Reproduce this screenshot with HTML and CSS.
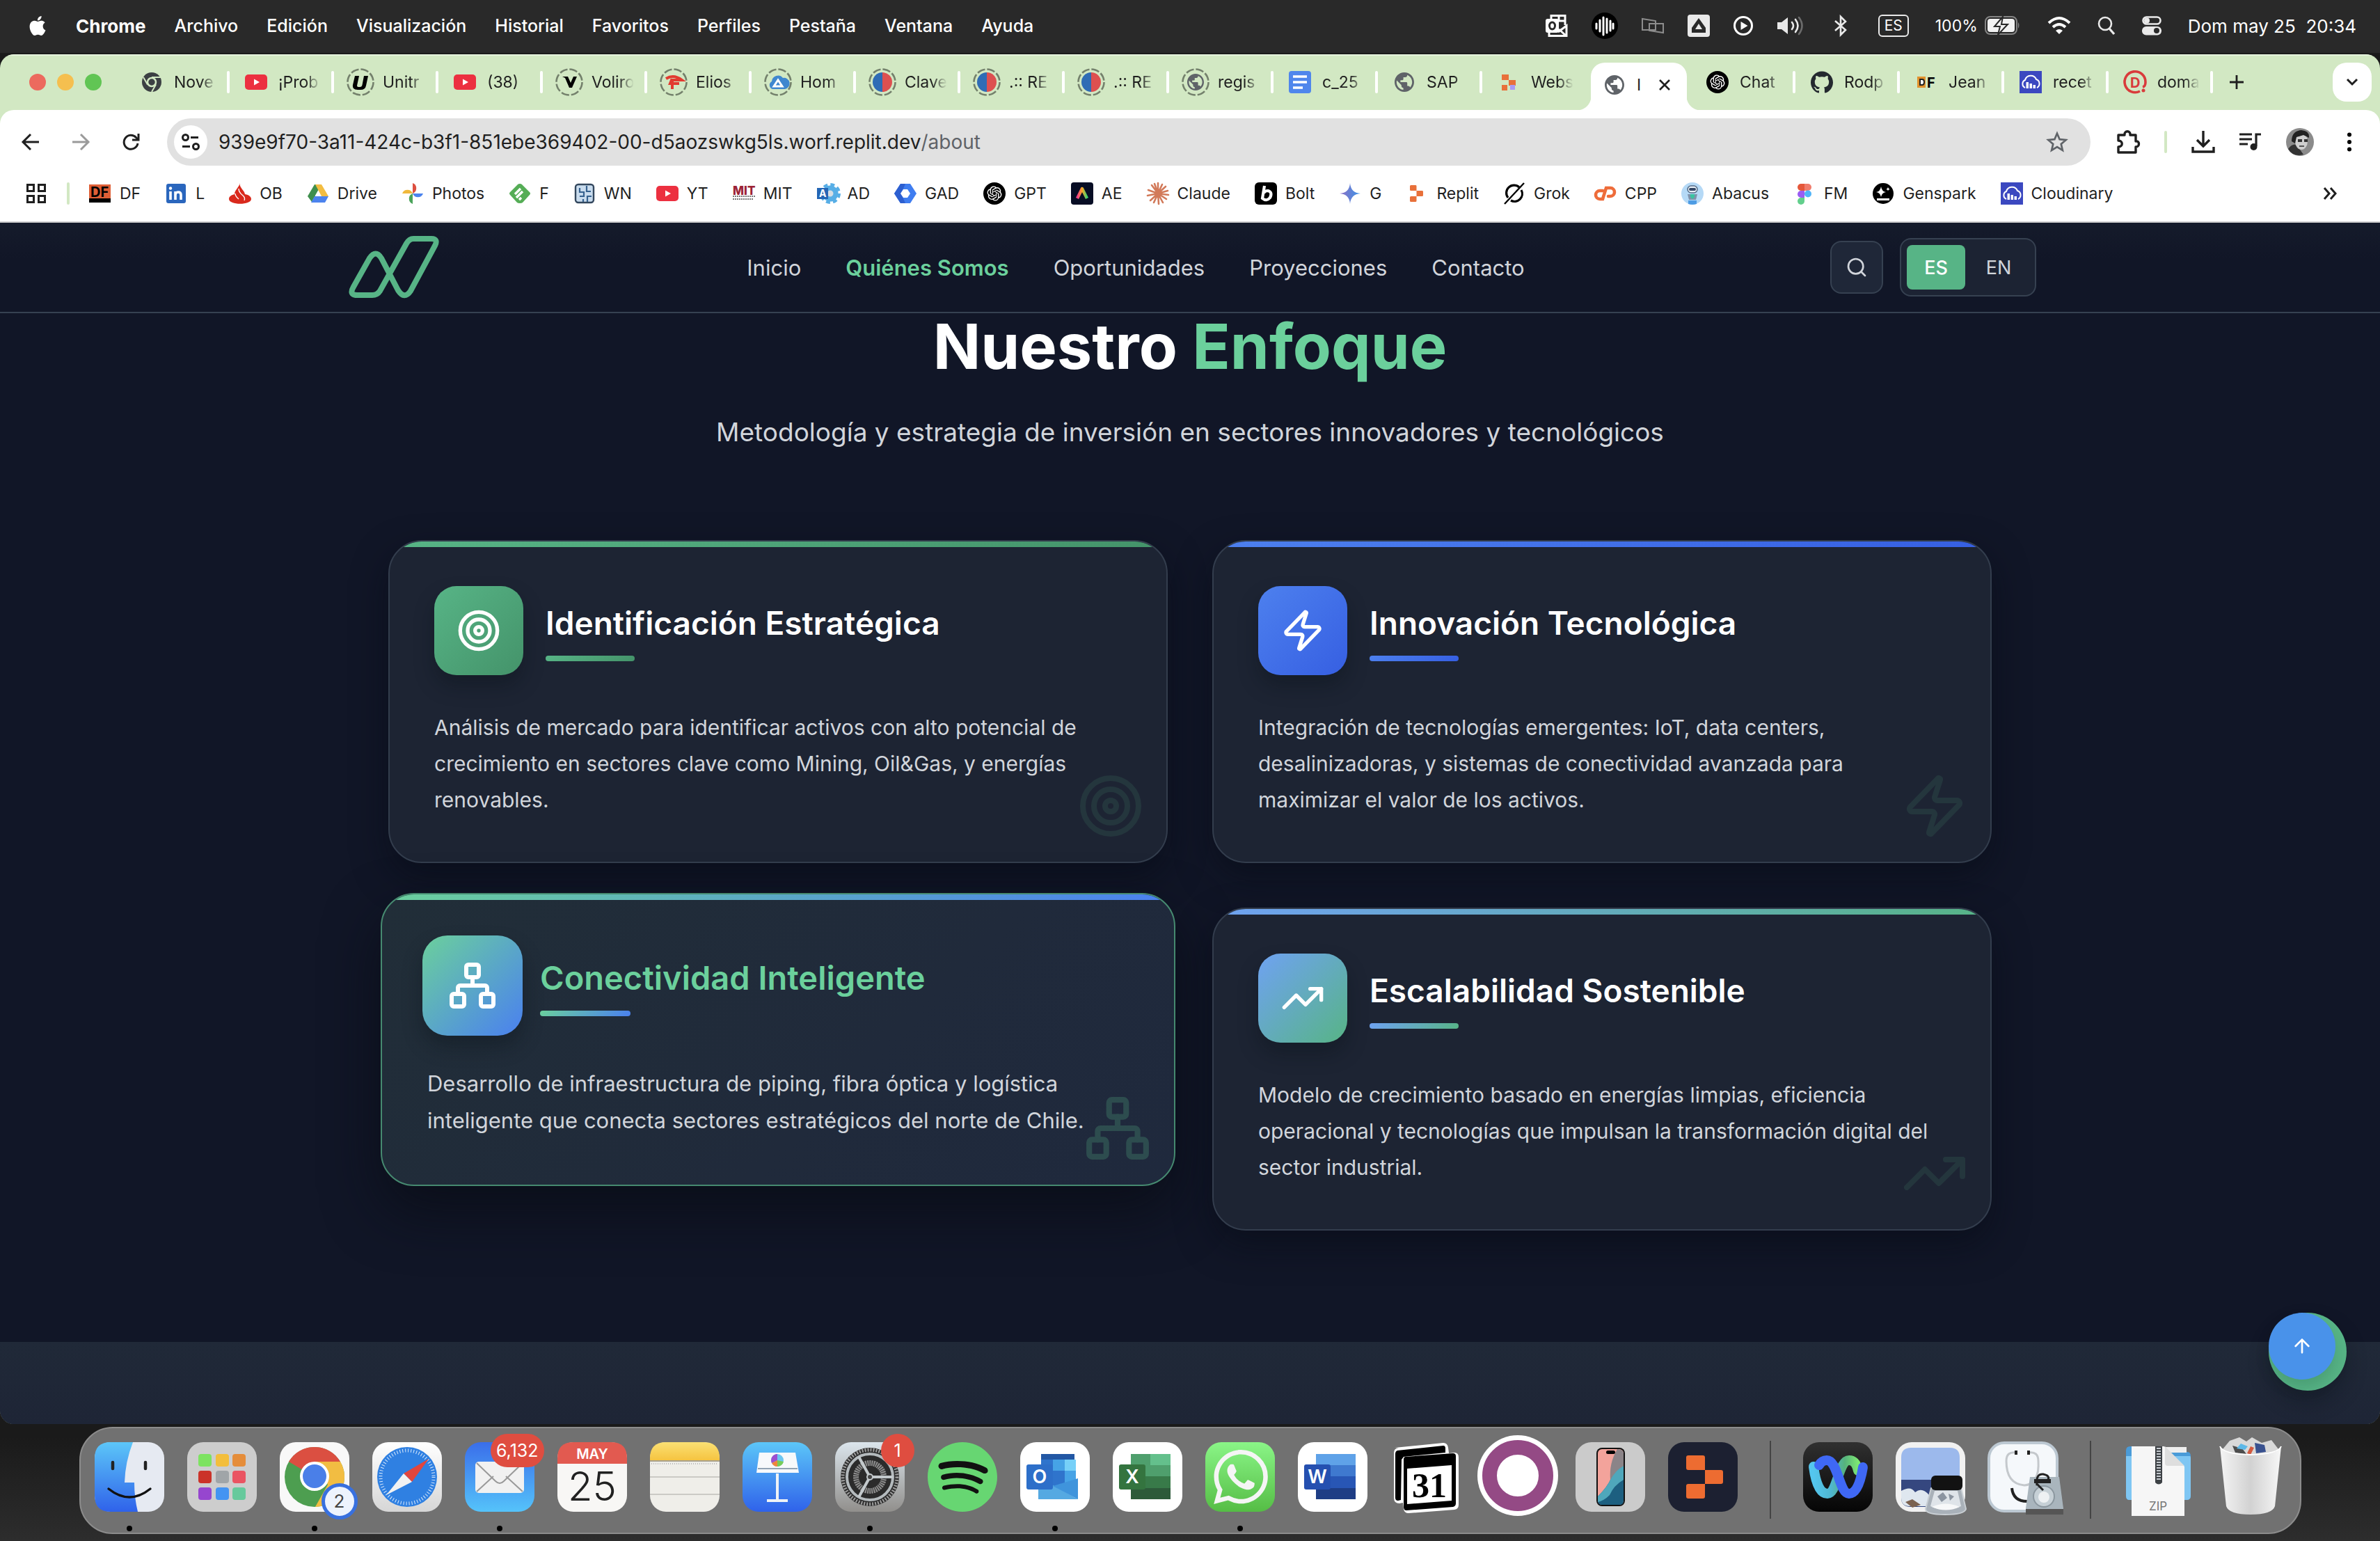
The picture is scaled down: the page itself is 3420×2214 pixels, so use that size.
FILE: index.html
```html
<!DOCTYPE html>
<html lang="es">
<head>
<meta charset="utf-8">
<title>Nuestro Enfoque</title>
<link rel="stylesheet" href="styles.css">
</head>
<body>

<svg class="sprite" aria-hidden="true">
  <defs>
    <linearGradient id="g-blue" x1="0" y1="0" x2="0" y2="1"><stop offset="0" stop-color="#5cc6f8"/><stop offset="1" stop-color="#2f62ea"/></linearGradient>
    <linearGradient id="g-mail" x1="0" y1="0" x2="0" y2="1"><stop offset="0" stop-color="#3a6eea"/><stop offset="1" stop-color="#55c3fa"/></linearGradient>
    <linearGradient id="g-white" x1="0" y1="0" x2="0" y2="1"><stop offset="0" stop-color="#fff"/><stop offset="1" stop-color="#d6d6d6"/></linearGradient>
    <linearGradient id="g-green" x1="0" y1="0" x2="0" y2="1"><stop offset="0" stop-color="#8af587"/><stop offset="1" stop-color="#55bd45"/></linearGradient>
    <linearGradient id="g-steel" x1="0" y1="0" x2="0" y2="1"><stop offset="0" stop-color="#dbe5ec"/><stop offset="1" stop-color="#918f8c"/></linearGradient>
    <linearGradient id="g-black" x1="0" y1="0" x2="0" y2="1"><stop offset="0" stop-color="#303030"/><stop offset="1" stop-color="#050505"/></linearGradient>
    <linearGradient id="g-note" x1="0" y1="0" x2="0" y2="1"><stop offset="0" stop-color="#fae074"/><stop offset="1" stop-color="#f6c440"/></linearGradient>
    <linearGradient id="g-rainbow" x1="0" y1="0" x2="1" y2="0"><stop offset="0" stop-color="#f2398c"/><stop offset=".5" stop-color="#f9a825"/><stop offset="1" stop-color="#3bd16f"/></linearGradient>
    <linearGradient id="g-star" x1="0" y1="0" x2="1" y2="0"><stop offset="0" stop-color="#8e6fc4"/><stop offset="1" stop-color="#3a94e8"/></linearGradient>
    <linearGradient id="g-webex" x1="0" y1="0" x2="1" y2="0"><stop offset="0" stop-color="#54c6ee"/><stop offset=".4" stop-color="#4fb6cf"/><stop offset=".7" stop-color="#56b27c"/><stop offset="1" stop-color="#7de873"/></linearGradient>
    <linearGradient id="g-phone" x1="0" y1="0" x2="0" y2="1"><stop offset="0" stop-color="#f29a92"/><stop offset=".45" stop-color="#f7bdb4"/><stop offset=".5" stop-color="#4fa7bb"/><stop offset="1" stop-color="#0d3555"/></linearGradient>
    <linearGradient id="g-bin" x1="0" y1="0" x2="1" y2="0"><stop offset="0" stop-color="#f4f4f4"/><stop offset=".5" stop-color="#d2d2d2"/><stop offset="1" stop-color="#f7f7f7"/></linearGradient>
  </defs>
  <symbol id="i-ring" viewBox="0 0 40 40"><circle cx="20" cy="20" r="18.5" fill="none" stroke="#74816c" stroke-width="2.6" stroke-dasharray="11.5 3"/></symbol>
  <symbol id="i-globe" viewBox="2 2 20 20"><path fill="#5f6368" d="M12 2C6.480 2 2 6.480 2 12s4.480 10 10 10 10-4.480 10-10S17.520 2 12 2zm-1 17.930c-3.950-.490-7-3.850-7-7.930 0-.620.080-1.210.210-1.790L9 15v1c0 1.100.900 2 2 2v1.930zm6.900-2.540c-.260-.810-1-1.390-1.900-1.390h-1v-3c0-.550-.450-1-1-1H8v-2h2c.550 0 1-.450 1-1V7h2c1.100 0 2-.900 2-2v-.410c2.930 1.190 5 4.060 5 7.410 0 2.080-.800 3.970-2.100 5.390z"/></symbol>
  <symbol id="i-yt" viewBox="0 0 32 32"><rect y="5" width="32" height="22" rx="5" fill="#ec3040"/><path d="M13 11.500v9l8-4.500z" fill="#fff"/></symbol>
  <symbol id="i-gpt" viewBox="0 0 32 32"><circle cx="16" cy="16" r="16"/><path transform="translate(5.500 5.500) scale(.875)" fill="#fff" d="M22.282 9.821a5.985 5.985 0 0 0-.516-4.911 6.046 6.046 0 0 0-6.510-2.900A6.065 6.065 0 0 0 4.981 4.182a5.985 5.985 0 0 0-3.998 2.900 6.046 6.046 0 0 0 .743 7.097 5.980 5.980 0 0 0 .511 4.911 6.051 6.051 0 0 0 6.515 2.900A5.985 5.985 0 0 0 13.260 24a6.056 6.056 0 0 0 5.772-4.206 5.989 5.989 0 0 0 3.998-2.900 6.056 6.056 0 0 0-.748-7.073zm-9.022 12.608a4.476 4.476 0 0 1-2.876-1.041l.142-.080 4.778-2.758a.795.795 0 0 0 .393-.681v-6.737l2.020 1.169a.071.071 0 0 1 .038.052v5.583a4.504 4.504 0 0 1-4.495 4.494zm-9.661-4.125a4.471 4.471 0 0 1-.535-3.014l.142.085 4.783 2.758a.771.771 0 0 0 .781 0l5.843-3.369v2.332a.080.080 0 0 1-.033.062L9.740 19.950a4.499 4.499 0 0 1-6.141-1.646zM2.341 7.896a4.485 4.485 0 0 1 2.366-1.973V11.600a.766.766 0 0 0 .388.677l5.814 3.354-2.020 1.169a.076.076 0 0 1-.071 0l-4.830-2.787A4.504 4.504 0 0 1 2.341 7.872zm16.596 3.856L13.104 8.364 15.119 7.200a.076.076 0 0 1 .071 0l4.830 2.791a4.494 4.494 0 0 1-.677 8.104v-5.677a.790.790 0 0 0-.407-.667zm2.011-3.023l-.142-.085-4.774-2.782a.776.776 0 0 0-.785 0L9.409 9.230V6.897a.066.066 0 0 1 .028-.062l4.830-2.787a4.499 4.499 0 0 1 6.680 4.660zM8.307 12.863l-2.020-1.164a.080.080 0 0 1-.038-.057V6.074a4.499 4.499 0 0 1 7.376-3.454l-.142.081L8.704 5.459a.795.795 0 0 0-.393.681zm1.098-2.365l2.602-1.500 2.607 1.500v2.999l-2.597 1.500-2.607-1.500Z"/></symbol>
  <symbol id="i-chile" viewBox="0 0 40 40"><path d="M20 6a14 14 0 0 0 0 28z" fill="#2f6cb5"/><path d="M20 6a14 14 0 0 1 0 28z" fill="#dd5050"/><use href="#i-ring"/></symbol>
  <symbol id="i-cloud" viewBox="0 0 32 32"><path fill="#3b48c0" d="M0 0h32v32H0z"/><path d="M8 24a6 6 0 0 1 0-11 8.500 8.500 0 0 1 16-1A6.500 6.500 0 0 1 25 24" fill="none" stroke="#fff" stroke-width="2"/><path fill="#fff" d="M9.500 16h3.500v9H9.500zM14.500 18h3.500v7h-3.500zM19.500 20h3.500v5h-3.500z"/></symbol>
  <symbol id="i-replit" viewBox="0 0 32 32"><path fill="#e8703a" d="M6 5.500A1.500 1.500 0 0 1 7.500 4H14a1.500 1.500 0 0 1 1.500 1.500V12H7.500A1.500 1.500 0 0 1 6 10.500zM15.500 12h8a1.500 1.500 0 0 1 1.500 1.500v5a1.500 1.500 0 0 1-1.500 1.500h-8zM6 21.500A1.500 1.500 0 0 1 7.500 20h8v6.500A1.500 1.500 0 0 1 14 28H7.500A1.500 1.500 0 0 1 6 26.500z"/></symbol>
  <symbol id="i-target" viewBox="0 0 24 24"><circle cx="12" cy="12" r="10"/><circle cx="12" cy="12" r="6"/><circle cx="12" cy="12" r="2"/></symbol>
  <symbol id="i-zap" viewBox="0 0 24 24"><path d="M4 14a1 1 0 0 1-.780-1.630l9.900-10.200a.500.500 0 0 1 .860.460l-1.920 6.020A1 1 0 0 0 13 10h7a1 1 0 0 1 .780 1.630l-9.900 10.200a.500.500 0 0 1-.860-.460l1.920-6.020A1 1 0 0 0 11 14z"/></symbol>
  <symbol id="i-network" viewBox="0 0 24 24"><rect x="16" y="16" width="6" height="6" rx="1"/><rect x="2" y="16" width="6" height="6" rx="1"/><rect x="9" y="2" width="6" height="6" rx="1"/><path d="M5 16v-3a1 1 0 0 1 1-1h12a1 1 0 0 1 1 1v3M12 12V8"/></symbol>
  <symbol id="i-trend" viewBox="0 0 24 24"><path d="m22 7-8.500 8.500-5-5L2 17"/><path d="M16 7h6v6"/></symbol>
</svg>

<header class="menubar">
  <nav class="menubar-menus" aria-label="Menú">
    <button class="menu-apple" aria-label="Apple"><svg width="28" height="34" viewBox="0 0 24 24" fill="#fff"><path d="M12.152 6.896c-.948 0-2.415-1.078-3.960-1.040-2.040.027-3.910 1.183-4.961 3.014-2.117 3.675-.546 9.103 1.519 12.090 1.013 1.454 2.208 3.090 3.792 3.039 1.520-.065 2.090-.987 3.935-.987 1.831 0 2.350.987 3.960.948 1.637-.026 2.676-1.480 3.676-2.948 1.156-1.688 1.636-3.325 1.662-3.415-.039-.013-3.182-1.221-3.220-4.857-.026-3.040 2.480-4.494 2.597-4.559-1.429-2.090-3.623-2.324-4.390-2.376-2-.156-3.675 1.090-4.610 1.090zM15.530 3.830c.843-1.012 1.400-2.427 1.245-3.830-1.207.052-2.662.805-3.532 1.818-.780.896-1.454 2.338-1.273 3.714 1.338.104 2.715-.688 3.559-1.701"/></svg></button>
    <button class="menu-app">Chrome</button>
    <button>Archivo</button>
    <button>Edición</button>
    <button>Visualización</button>
    <button>Historial</button>
    <button>Favoritos</button>
    <button>Perfiles</button>
    <button>Pestaña</button>
    <button>Ventana</button>
    <button>Ayuda</button>
  </nav>
  <div class="menubar-status">
    <div class="status-apps">
      <svg width="32" height="34" viewBox="0 0 32 34" fill="none" stroke="#fff" stroke-width="3"><path d="M8 7V2.500h20V16M5 27v4.500h25V17L18 26M19 10h9M19 2v8M19 22l10 9"/><rect x="0" y="7" width="19" height="20" rx="3" fill="#fff" stroke="none"/><ellipse cx="9.500" cy="17" rx="4" ry="5" stroke="#292929"/></svg>
      <svg width="38" height="38" viewBox="0 0 38 38"><circle cx="19" cy="19" r="19"/><path d="M7 16v7M12 11v16M17 7v25M22 9v20M27 12v14M31 16v7" stroke="#fff" stroke-width="3" stroke-linecap="round"/></svg>
      <svg width="32" height="24" viewBox="0 0 32 24" fill="none" stroke="#8d8d8d" stroke-width="2"><path d="M1 2l19 3v13H1zM11 9h20v13l-20-3z"/></svg>
      <svg width="32" height="32" viewBox="0 0 32 32"><rect width="32" height="32" rx="4" fill="#e9e9e9"/><path d="M16 5l10 14v7H6v-7z" fill="#292929"/><path d="M16 13l5 8H11z" fill="#e9e9e9"/></svg>
      <svg width="28" height="28" viewBox="0 0 28 28"><circle cx="14" cy="14" r="12.500" fill="none" stroke="#fff" stroke-width="3"/><path d="M10.500 8v12l10-6z" fill="#fff"/></svg>
    </div>
    <div class="status-system">
      <svg width="38" height="28" viewBox="0 0 38 28" fill="none" stroke="#e9e9e9" stroke-width="2.600" stroke-linecap="round"><path d="M1 9h6l9-7v24l-9-7H1z" fill="#e9e9e9" stroke="none"/><path d="M22 9q4 5 0 10M27 5q7 9 0 18"/><path d="M32 2q9 12 0 24" stroke="#6b6b6b"/></svg>
      <svg width="32" height="30" viewBox="0 0 32 30" fill="none" stroke="#e9e9e9" stroke-width="2.600"><path d="M8 8l15 13-7 7V2l7 7L8 22"/></svg>
      <span class="status-lang">ES</span>
      <span class="status-battery"><span>100%</span>
        <svg width="52" height="28" viewBox="0 0 52 28"><rect x="1" y="1" width="45" height="25" rx="7" fill="none" stroke="#858585" stroke-width="2"/><rect x="4" y="4" width="39" height="19" rx="4" fill="#f2f2f2"/><path d="M48 9q3 4 0 9z" fill="#858585"/><path d="M26 1L14 15h8l-3 12 14-15h-9z" fill="#f2f2f2" stroke="#292929" stroke-width="2"/></svg>
      </span>
      <svg width="34" height="26" viewBox="0 0 34 26" fill="none" stroke="#fff" stroke-width="4"><path d="M2 9q15-14 30 0M8 15q9-8 18 0"/><path d="M12 20q5-4 10 0l-5 5z" fill="#fff" stroke="none"/></svg>
      <svg width="26" height="28" viewBox="0 0 26 28" fill="none" stroke="#e9e9e9" stroke-width="2.600"><circle cx="11" cy="11" r="9"/><path d="M17 18l7 8" stroke-width="3.400"/></svg>
      <svg width="28" height="28" viewBox="0 0 28 28"><rect x="1.500" y="1.500" width="25" height="10" rx="5" fill="none" stroke="#e9e9e9" stroke-width="2.600"/><circle cx="7" cy="6.500" r="4" fill="#e9e9e9"/><rect y="15" width="28" height="12.500" rx="6" fill="#e9e9e9"/><circle cx="21" cy="21" r="4" fill="#292929"/></svg>
      <time class="status-clock">Dom may 25&nbsp; 20:34</time>
    </div>
  </div>
</header>

<div class="desktop">
<div class="window">
  <div class="tabstrip">
    <div class="lights"><i class="light-close"></i><i class="light-min"></i><i class="light-max"></i></div>
    <div class="tabs">
      <button class="tab"><svg viewBox="0 0 40 40"><circle cx="20" cy="20" r="14" fill="#3c4043"/><path d="M20 13h13M14 23.500L8 13M26 23.500L20 34" stroke="#d2e8c3" stroke-width="2"/><circle cx="20" cy="20" r="6" fill="#3c4043" stroke="#d2e8c3" stroke-width="2.500"/></svg><span>Nove</span></button>
      <button class="tab"><svg viewBox="-4 -4 40 40"><use href="#i-yt" width="32" height="32"/></svg><span>¡Prob</span></button>
      <button class="tab"><svg viewBox="0 0 40 40"><use href="#i-ring"/><path d="M12 11h6l-3 14q0 2 2 2h2q3 0 3.500-3l2.500-13h6l-3 14q-1 6-8 6h-4q-8 0-7-7z"/></svg><span>Unitr</span></button>
      <button class="tab"><svg viewBox="-4 -4 40 40"><use href="#i-yt" width="32" height="32"/></svg><span>(38)</span></button>
      <button class="tab"><svg viewBox="0 0 40 40"><use href="#i-ring"/><path d="M10 12h8l4 9 4-9h5l-7 16h-4l-6-14z"/></svg><span>Voliro</span></button>
      <button class="tab"><svg viewBox="0 0 40 40"><use href="#i-ring"/><path d="M9 15q11-7 23 2H17l-2 5h13M18 17v13" fill="none" stroke="#e23b30" stroke-width="4"/></svg><span>Elios</span></button>
      <button class="tab"><svg viewBox="0 0 40 40"><use href="#i-ring"/><path d="M12 30a6 6 0 0 1-1-11 9 9 0 0 1 16-5 8 8 0 0 1 3 16z" fill="#3f87cf"/><path d="M14 26l6-9 6 9z" fill="none" stroke="#fff" stroke-width="3"/></svg><span>Hom</span></button>
      <button class="tab"><svg><use href="#i-chile"/></svg><span>Clave</span></button>
      <button class="tab"><svg><use href="#i-chile"/></svg><span>.:: RE</span></button>
      <button class="tab"><svg><use href="#i-chile"/></svg><span>.:: RE</span></button>
      <button class="tab"><svg viewBox="0 0 40 40"><use href="#i-ring"/><use href="#i-globe" x="8" y="8" width="24" height="24"/></svg><span>regis</span></button>
      <button class="tab"><svg viewBox="-4 -4 40 40"><rect width="32" height="32" rx="4" fill="#4f86ec"/><path d="M6 8h20M6 16h20M6 24h14" stroke="#fff" stroke-width="3.600"/></svg><span>c_25</span></button>
      <button class="tab"><svg viewBox="0 0 40 40"><use href="#i-globe" x="6" y="6" width="28" height="28"/></svg><span>SAP</span></button>
      <button class="tab tab-before-active"><svg viewBox="-4 -4 40 40"><path fill="#e8703a" d="M6 5h10v8h10v8H16v-8H6z"/><path fill="#e8703a" d="M6 20h8v8H6z"/><path fill="#a99bf5" d="M18 20h7v7h-7z"/></svg><span>Webs</span></button>
      <button class="tab tab-active"><svg viewBox="0 0 40 40"><use href="#i-globe" x="6" y="6" width="28" height="28"/></svg><span>I</span><svg class="tab-close" viewBox="0 0 16 16"><path d="M1 1l14 14M15 1L1 15" stroke="#1f1f1f" stroke-width="2.600"/></svg></button>
      <button class="tab"><svg viewBox="-4 -4 40 40"><use href="#i-gpt" width="32" height="32"/></svg><span>Chat</span></button>
      <button class="tab"><svg viewBox="-3 -3 30 30"><path fill="#24292f" d="M12 .297c-6.630 0-12 5.373-12 12 0 5.303 3.438 9.800 8.205 11.385.600.113.820-.258.820-.577 0-.285-.010-1.040-.015-2.040-3.338.724-4.042-1.610-4.042-1.610C4.422 18.070 3.633 17.700 3.633 17.700c-1.087-.744.084-.729.084-.729 1.205.084 1.838 1.236 1.838 1.236 1.070 1.835 2.809 1.305 3.495.998.108-.776.417-1.305.760-1.605-2.665-.300-5.466-1.332-5.466-5.930 0-1.310.465-2.380 1.235-3.220-.135-.303-.540-1.523.105-3.176 0 0 1.005-.322 3.300 1.230.960-.267 1.980-.399 3-.405 1.020.006 2.040.138 3 .405 2.280-1.552 3.285-1.230 3.285-1.230.645 1.653.240 2.873.120 3.176.765.840 1.230 1.910 1.230 3.220 0 4.610-2.805 5.625-5.475 5.920.420.360.810 1.096.810 2.220 0 1.606-.015 2.896-.015 3.286 0 .315.210.690.825.570C20.565 22.092 24 17.592 24 12.297c0-6.627-5.373-12-12-12"/></svg><span>Rodp</span></button>
      <button class="tab"><svg viewBox="0 0 40 40"><path d="M7 12h12v16H7z" fill="#e2922e"/><path d="M11 16h3q3 0 3 4t-3 4h-3z" fill="#fff" stroke="#222" stroke-width="2"/><text x="21" y="28" class="fav-letters">F</text></svg><span>Jean</span></button>
      <button class="tab"><svg viewBox="-4 -4 40 40"><use href="#i-cloud" width="32" height="32"/></svg><span>recet</span></button>
      <button class="tab"><svg viewBox="0 0 40 40"><path d="M27 33A15 15 0 1 1 35 20q0 6-4 7" fill="none" stroke="#d93b3b" stroke-width="3.600"/><circle cx="32" cy="32" r="2.500" fill="#d93b3b"/><text x="13" y="28" class="fav-letters fav-red">D</text></svg><span>doma</span></button>
    </div>
    <button class="newtab" aria-label="Nueva pestaña"><svg width="20" height="20" viewBox="0 0 20 20"><path d="M10 0v20M0 10h20" stroke="#1f1f1f" stroke-width="2.800"/></svg></button>
    <button class="tabsearch" aria-label="Buscar pestañas"><svg width="18" height="12" viewBox="0 0 18 12"><path d="M2 2l7 7 7-7" fill="none" stroke="#1f1f1f" stroke-width="3"/></svg></button>
  </div>

  <div class="toolbar">
    <button class="tool" aria-label="Atrás"><svg width="26" height="26" viewBox="0 0 26 26" fill="none" stroke="#1f1f1f" stroke-width="3"><path d="M25 13H3M13 2L2 13l11 11"/></svg></button>
    <button class="tool" aria-label="Adelante"><svg width="26" height="26" viewBox="0 0 26 26" fill="none" stroke="#9a9a9a" stroke-width="3"><path d="M1 13h22M13 2l11 11-11 11"/></svg></button>
    <button class="tool" aria-label="Recargar"><svg width="26" height="26" viewBox="0 0 26 26" fill="none" stroke="#1f1f1f" stroke-width="3"><path d="M23 15a10 10 0 1 1-2.500-8.500L24 10"/><path d="M24 1v9h-9" /></svg></button>
    <label class="omnibox">
      <span class="site-info"><svg width="26" height="24" viewBox="0 0 26 24" fill="none" stroke="#1f1f1f" stroke-width="3"><circle cx="5.500" cy="5.500" r="4"/><path d="M13 5.500h11M1 18.500h11"/><circle cx="20.500" cy="18.500" r="4"/></svg></span>
      <input class="url-host" type="text" aria-label="Dirección" value="939e9f70-3a11-424c-b3f1-851ebe369402-00-d5aozswkg5ls.worf.replit.dev"><span class="url-path">/about</span>
      <svg class="star" width="32" height="32" viewBox="0 0 24 24" fill="none" stroke="#5f6368" stroke-width="2"><path d="M12 2.800l2.700 6.300 6.800.600-5.200 4.500 1.600 6.700-5.900-3.600-5.900 3.600 1.600-6.700-5.200-4.500 6.800-.600z"/></svg>
    </label>
    <div class="tools-right">
      <svg width="34" height="34" viewBox="0 0 34 34" fill="none" stroke="#1f1f1f" stroke-width="3.400"><path d="M3 7h9c-1-7 9-7 8 0h8v9c6-1 6 8 0 8v8H3v-8c7 0 7-9 0-9z" stroke-linejoin="round"/></svg>
      <i class="rule"></i>
      <svg width="34" height="34" viewBox="0 0 34 34" fill="none" stroke="#1f1f1f" stroke-width="3.400"><path d="M17 1v21M8 14l9 9 9-9M2 24v7h30v-7"/></svg>
      <svg width="32" height="26" viewBox="0 0 32 26"><path d="M0 2h18M0 9h18M0 16h12M31 2h-7v17" fill="none" stroke="#1f1f1f" stroke-width="3.200"/><circle cx="20.500" cy="20" r="5" fill="#1f1f1f"/></svg>
      <svg width="40" height="40" viewBox="0 0 40 40"><circle cx="20" cy="20" r="20" fill="#8b8b8b"/><path d="M3 30q6-8 12-6l10 14Q10 42 3 30z" fill="#333"/><ellipse cx="22" cy="19" rx="9" ry="12" fill="#cfcfcf"/><path d="M8 19Q8 4 22 3q12 1 11 11l-8-4-10 3-2 9z" fill="#222"/><path d="M17 16h6v4h-6zM26 16h5v4h-5z" fill="#333"/><path d="M19 26h7" stroke="#555" stroke-width="2"/></svg>
      <svg width="32" height="28" viewBox="0 0 32 28"><circle cx="16" cy="3.500" r="3"/><circle cx="16" cy="14" r="3"/><circle cx="16" cy="24.500" r="3"/></svg>
    </div>
  </div>

  <nav class="bookmarks" aria-label="Marcadores">
    <svg class="bm-apps" width="28" height="28" viewBox="0 0 28 28" fill="none" stroke="#1f1f1f" stroke-width="3"><path d="M1.500 1.500h9v9h-9zM17.500 1.500h9v9h-9zM1.500 17.500h9v9h-9zM17.500 17.500h9v9h-9z"/></svg>
    <i class="rule"></i>
    <div class="bm-list">
      <a href="#"><svg viewBox="0 0 32 32"><path fill="#df5f36" d="M0 3h31v26H0z"/><path d="M0 23h31v6H0z"/><text x="2" y="21" class="fav-letters">DF</text></svg>DF</a>
      <a href="#"><svg viewBox="0 0 32 32"><rect x="2" y="2" width="28" height="28" rx="3" fill="#2a66bd"/><path d="M8 13v12M15 13v12M15 18q0-4 4-4t4 4v7" fill="none" stroke="#fff" stroke-width="3.600"/><circle cx="8" cy="8.500" r="2.200" fill="#fff"/></svg>L</a>
      <a href="#"><svg viewBox="0 0 32 32"><path fill="#d9291c" d="M16 1c-2 6 6 10 7 16 6 1 9 4 9 7 0 9-32 9-32 0 0-4 4-6 8-7 0-6 6-9 8-16z"/><path d="M14 9q0 5 5 9t3 8M9 16q0 4 5 8" stroke="#fff" stroke-width="1.400" fill="none"/></svg>OB</a>
      <a href="#"><svg viewBox="0 0 32 32"><path fill="#3f8f4e" d="M11 3h10L7 28 1 20z"/><path fill="#f3bd42" d="M12 3h9l10 17H21z"/><path fill="#4c83ee" d="M11 20h20l-5 9H6z"/><path fill="#fff" d="M16 12l4 7h-8z"/></svg>Drive</a>
      <a href="#"><svg viewBox="0 0 32 32"><path fill="#dd4f40" d="M16 1a8 8 0 0 1 0 15z"/><path fill="#f0b93c" d="M1 16a8 8 0 0 1 15 0z"/><path fill="#4a83ee" d="M31 16a8 8 0 0 1-15 0z"/><path fill="#4aa35a" d="M16 31a8 8 0 0 1 0-15z"/></svg>Photos</a>
      <a href="#"><svg viewBox="0 0 32 32"><path fill="#55ad56" d="M16 2q2 0 3 1l11 11q2 2 0 4L20 29q-1 1-4 1t-4-1L2 18q-2-2 0-4L13 3q1-1 3-1z"/><path d="M9 17l8-8M11 22l9-9M15 25l3-3" stroke="#fff" stroke-width="3.400"/></svg>F</a>
      <a href="#"><svg viewBox="0 0 32 32"><rect x="3" y="3" width="26" height="26" rx="4" fill="#c9dcee" stroke="#33475d" stroke-width="2.400"/><path d="M9 8v6h6v6H9M19 5v8h6M20 28v-8h6M14 24v4" fill="none" stroke="#35618f" stroke-width="2.200"/></svg>WN</a>
      <a href="#"><svg><use href="#i-yt"/></svg>YT</a>
      <a href="#"><svg viewBox="0 0 32 32"><text x="0" y="18" class="fav-mit">MIT</text><path d="M0 20h32M0 24h30" stroke="#777" stroke-width="2" stroke-dasharray="2 1"/></svg>MIT</a>
      <a href="#"><svg viewBox="0 0 32 32"><circle cx="19" cy="16" r="8" fill="#d6dde4" stroke="#57aee6" stroke-width="7"/><circle cx="19" cy="16" r="13" fill="none" stroke="#57aee6" stroke-width="4" stroke-dasharray="6 4.200"/><path fill="#2466b5" d="M0 8h16v16H0z"/><text x="3" y="21" class="fav-small">A</text></svg>AD</a>
      <a href="#"><svg viewBox="0 0 32 32"><path fill="#3f7df0" d="M9 2h14l9 14-9 14H9L0 16z"/><path fill="#2d5fd0" d="M9 2h7l-6 14 6 14H9L0 16z"/><path fill="#fff" d="M13 10h6l4 6-4 6h-6l-4-6z"/></svg>GAD</a>
      <a href="#"><svg><use href="#i-gpt"/></svg>GPT</a>
      <a href="#"><svg viewBox="0 0 32 32"><rect width="32" height="32" rx="4" fill="#070d24"/><path d="M9 23l7-14 7 14" fill="none" stroke="url(#g-rainbow)" stroke-width="4.500" stroke-linejoin="round"/></svg>AE</a>
      <a href="#"><svg viewBox="0 0 32 32" stroke="#d27a5a" stroke-width="2.600" stroke-linecap="round"><path d="M16 16V1M16 16l6-13M16 16L27 6M16 16l14-4M16 16l15 2M16 16l12 8M16 16l7 13M16 16l1 15M16 16l-6 13M16 16L5 26M16 16L1 19M16 16L2 11M16 16L7 4M16 16L11 2"/></svg>Claude</a>
      <a href="#"><svg viewBox="0 0 32 32"><rect width="32" height="32" rx="6"/><path d="M14 5l-3 18q6 5 11-1 4-8-3-10-4 0-6 3" fill="none" stroke="#fff" stroke-width="4.200"/></svg>Bolt</a>
      <a href="#"><svg viewBox="0 0 32 32"><path d="M16 1q1 14 15 15-14 1-15 15Q15 17 1 16 15 15 16 1z" fill="url(#g-star)"/></svg>G</a>
      <a href="#"><svg><use href="#i-replit"/></svg>Replit</a>
      <a href="#"><svg viewBox="0 0 32 32" fill="none" stroke="#000" stroke-width="3.200"><path d="M23 7A11 11 0 0 0 7 22M11 26A11 11 0 0 0 26 11"/><path d="M30 1L2 31" stroke-width="2.400"/></svg>Grok</a>
      <a href="#"><svg viewBox="0 0 32 32" fill="none" stroke="#ee6c3a" stroke-width="4.600" stroke-linecap="round"><path d="M12 12H8a5 5 0 0 0 0 12h4L17 8h6a5 5 0 0 1 0 12h-3"/></svg>CPP</a>
      <a href="#"><svg viewBox="0 0 32 32"><circle cx="16" cy="16" r="16" fill="#b5d9f6"/><rect x="9" y="5" width="14" height="10" rx="5" fill="#e9f1f8" stroke="#546a85" stroke-width="1.500"/><rect x="11" y="8" width="10" height="4" rx="2" fill="#334766"/><path d="M9 17h14l-2 8H11z" fill="#7f93ab"/><path d="M13 17h6v4l-3 3-3-3z" fill="#3ac3a0"/><path d="M10 26h12v5q-6 2-12 0z" fill="#4e9ce4"/></svg>Abacus</a>
      <a href="#"><svg viewBox="0 0 32 32"><path fill="#e5573a" d="M16 2h-5a5 5 0 0 0 0 10h5z"/><path fill="#f07c6c" d="M16 2h5a5 5 0 0 1 0 10h-5z"/><path fill="#9a5cf3" d="M16 12h-5a5 5 0 0 0 0 10h5z"/><circle cx="21" cy="16.500" r="5" fill="#50b4f8"/><path fill="#62cf8c" d="M16 22h-5a5 5 0 1 0 5 5z"/></svg>FM</a>
      <a href="#"><svg viewBox="0 0 32 32"><circle cx="16" cy="16" r="15"/><path fill="#fff" d="M13 6q1 7 7 8-6 1-7 7-1-6-7-7 6-1 7-8zM23 6q0 3 3 4-3 0-3 3 0-3-3-3 3-1 3-4zM7 23h18v3H7z"/></svg>Genspark</a>
      <a href="#"><svg><use href="#i-cloud"/></svg>Cloudinary</a>
    </div>
    <button class="bm-more" aria-label="Más marcadores"><svg width="20" height="18" viewBox="0 0 20 18" fill="none" stroke="#1f1f1f" stroke-width="3"><path d="M2 1l7 8-7 8M11 1l7 8-7 8"/></svg></button>
  </nav>

  <div class="page">
    <header class="site-nav">
      <div class="site-nav-inner">
        <a class="logo" href="#" aria-label="Inicio"><svg width="130" height="90" viewBox="0 0 130 90" fill="none" stroke="#57b486" stroke-width="8"><path d="M92 4H118Q128 4 123 14L88 79Q79 92 70 78L46 32Q38 19 29 32L6 73Q-1 85 11 85H33Q40 85 44 79L82 11Q86 4 92 4Z"/></svg></a>
        <nav class="links">
          <a href="#">Inicio</a>
          <a href="#" class="current">Quiénes Somos</a>
          <a href="#">Oportunidades</a>
          <a href="#">Proyecciones</a>
          <a href="#">Contacto</a>
        </nav>
        <div class="nav-actions">
          <button class="search-btn" aria-label="Buscar"><svg width="32" height="32" viewBox="0 0 24 24" fill="none" stroke="#d1d5db" stroke-width="2" stroke-linecap="round"><circle cx="11" cy="11" r="8"/><path d="M21 21l-4.300-4.300"/></svg></button>
          <div class="lang"><button class="lang-on">ES</button><button>EN</button></div>
        </div>
      </div>
    </header>

    <main class="approach">
      <h2>Nuestro <em>Enfoque</em></h2>
      <p class="lead">Metodología y estrategia de inversión en sectores innovadores y tecnológicos</p>
      <div class="cards">
        <article class="card card-green">
          <header class="card-head"><span class="card-icon"><svg><use href="#i-target"/></svg></span><div><h3>Identificación Estratégica</h3><i class="bar"></i></div></header>
          <p>Análisis de mercado para identificar activos con alto potencial de crecimiento en sectores clave como Mining, Oil&amp;Gas, y energías renovables.</p>
          <svg class="mark"><use href="#i-target"/></svg>
        </article>
        <article class="card card-blue">
          <header class="card-head"><span class="card-icon"><svg><use href="#i-zap"/></svg></span><div><h3>Innovación Tecnológica</h3><i class="bar"></i></div></header>
          <p>Integración de tecnologías emergentes: IoT, data centers, desalinizadoras, y sistemas de conectividad avanzada para maximizar el valor de los activos.</p>
          <svg class="mark"><use href="#i-zap"/></svg>
        </article>
        <article class="card card-mix card-raised">
          <header class="card-head"><span class="card-icon"><svg><use href="#i-network"/></svg></span><div><h3>Conectividad Inteligente</h3><i class="bar"></i></div></header>
          <p>Desarrollo de infraestructura de piping, fibra óptica y logística inteligente que conecta sectores estratégicos del norte de Chile.</p>
          <svg class="mark"><use href="#i-network"/></svg>
        </article>
        <article class="card card-sky">
          <header class="card-head"><span class="card-icon"><svg><use href="#i-trend"/></svg></span><div><h3>Escalabilidad Sostenible</h3><i class="bar"></i></div></header>
          <p>Modelo de crecimiento basado en energías limpias, eficiencia operacional y tecnologías que impulsan la transformación digital del sector industrial.</p>
          <svg class="mark"><use href="#i-trend"/></svg>
        </article>
      </div>
    </main>
    <section class="next-band"></section>
    <div class="to-top"><button aria-label="Volver arriba"><svg width="32" height="32" viewBox="0 0 24 24" fill="none" stroke="#fff" stroke-width="2" stroke-linecap="round" stroke-linejoin="round"><path d="M12 19V5M5 12l7-7 7 7"/></svg></button></div>
  </div>
</div>

<footer class="dock">
  <button class="app open" aria-label="Finder"><svg viewBox="0 0 100 100"><rect width="100" height="100" rx="23" fill="#e6eaf2"/><path d="M23 0h32q-11 28-12 58h14q0 22 5 42H23Q0 100 0 77V23Q0 0 23 0z" fill="url(#g-blue)"/><path d="M26 29v9M73 29v9" stroke="#222" stroke-width="4.500" stroke-linecap="round"/><path d="M20 67q30 24 60 0" fill="none" stroke="#111" stroke-width="3.400" stroke-linecap="round"/></svg></button>
  <button class="app" aria-label="Launchpad"><svg viewBox="0 0 100 100"><rect width="100" height="100" rx="23" fill="#cdcdcd"/><g><rect x="16" y="17" width="19" height="18" rx="4" fill="#7de361"/><rect x="41" y="17" width="19" height="18" rx="4" fill="#f3be3c"/><rect x="65" y="17" width="19" height="18" rx="4" fill="#e58d3a"/><rect x="16" y="41" width="19" height="18" rx="4" fill="#cb3329"/><rect x="41" y="41" width="19" height="18" rx="4" fill="#a0a5a8"/><rect x="65" y="41" width="19" height="18" rx="4" fill="#ea5462"/><rect x="16" y="65" width="19" height="18" rx="4" fill="#9646cf"/><rect x="41" y="65" width="19" height="18" rx="4" fill="#4494f2"/><rect x="65" y="65" width="19" height="18" rx="4" fill="#66c99c"/></g></svg></button>
  <button class="app open" aria-label="Chrome"><svg viewBox="0 0 100 100"><rect width="100" height="100" rx="23" fill="#f8f8f8"/><circle cx="50" cy="50" r="43" fill="#4d9e50"/><path d="M50 50L13 28A43 43 0 0 1 87 28z" fill="#db4f41"/><path d="M50 28h37a43 43 0 0 1-36 65l18-32z" fill="#f2bd42"/><circle cx="50" cy="49" r="21" fill="#fff"/><circle cx="50" cy="49" r="17" fill="#4a7fe8"/></svg><span class="count">2</span></button>
  <button class="app" aria-label="Safari"><svg viewBox="0 0 100 100"><rect width="100" height="100" rx="23" fill="url(#g-white)"/><circle cx="50" cy="50" r="43" fill="#2f80e2"/><circle cx="50" cy="50" r="38" fill="none" stroke="#dbeafc" stroke-width="5" stroke-dasharray="1 3"/><path d="M81 24L57 57 45 45z" fill="#e2453d"/><path d="M20 76l25-31 12 12z" fill="#f2f2f2"/></svg></button>
  <button class="app open" aria-label="Mail"><svg viewBox="0 0 100 100"><rect width="100" height="100" rx="23" fill="url(#g-mail)"/><rect x="15" y="28" width="70" height="45" rx="5" fill="#f1f1f1"/><path d="M17 71l24-22M83 71L59 49M17 30l27 26q6 6 12 0l27-26" fill="none" stroke="#999" stroke-width="2"/></svg><span class="badge">6,132</span></button>
  <button class="app" aria-label="Calendario"><svg viewBox="0 0 100 100"><rect width="100" height="100" rx="23" fill="#f8f7f5"/><path d="M0 31v-8Q0 0 23 0h54q23 0 23 23v8z" fill="#e25a50"/><text x="50" y="24" class="cal-month">MAY</text><text x="50" y="84" class="cal-day">25</text></svg></button>
  <button class="app" aria-label="Notas"><svg viewBox="0 0 100 100"><rect width="100" height="100" rx="23" fill="#efeee9"/><path d="M0 26v-3Q0 0 23 0h54q23 0 23 23v3z" fill="url(#g-note)"/><path d="M0 27h100" stroke="#a9a18c" stroke-width="2"/><path d="M2 31h96" stroke="#bbb" stroke-width="2" stroke-dasharray="1 2"/><path d="M0 50h100M0 75h100" stroke="#cbcac5" stroke-width="2"/></svg></button>
  <button class="app" aria-label="Keynote"><svg viewBox="0 0 100 100"><rect width="100" height="100" rx="23" fill="url(#g-blue)"/><path d="M24 15h52l5 29H20z" fill="#f7f9fb"/><path d="M22 38h57" stroke="#93a3b3" stroke-width="2"/><circle cx="50" cy="26" r="9" fill="#6cc6f0"/><path d="M50 26V17a9 9 0 0 0-8 13z" fill="#9b4fd0"/><path d="M50 26l-8 4a9 9 0 0 0 8 5z" fill="#f0853c"/><path d="M50 26v9a9 9 0 0 0 9-7z" fill="#77cc58"/><path d="M48 45h4v38h-4zM35 82h30v4H35z" fill="#eef2f6"/></svg></button>
  <button class="app open" aria-label="Ajustes"><svg viewBox="0 0 100 100"><rect width="100" height="100" rx="23" fill="url(#g-steel)"/><circle cx="50" cy="50" r="42" fill="#2b2b2b"/><circle cx="50" cy="50" r="39" fill="none" stroke="#9d9d9d" stroke-width="5" stroke-dasharray="2 2"/><circle cx="50" cy="50" r="33" fill="none" stroke="#b4babd" stroke-width="4"/><circle cx="50" cy="50" r="20" fill="none" stroke="#8e8e8e" stroke-width="8" stroke-dasharray="2 1"/><path d="M50 50h33M50 50L34 21M50 50L34 79" stroke="#c3c9cc" stroke-width="4"/><circle cx="50" cy="50" r="4" fill="#444" stroke="#c3c9cc" stroke-width="2"/></svg><span class="badge">1</span></button>
  <button class="app" aria-label="Spotify"><svg viewBox="0 0 24 24"><circle cx="12" cy="12" r="11.500" fill="#111"/><path fill="#67d672" d="M12 0C5.400 0 0 5.400 0 12s5.400 12 12 12 12-5.400 12-12S18.660 0 12 0zm5.521 17.340c-.240.359-.660.480-1.021.240-2.820-1.740-6.360-2.101-10.561-1.141-.418.122-.779-.179-.899-.539-.120-.421.180-.780.540-.900 4.560-1.021 8.520-.600 11.640 1.320.420.180.479.659.301 1.020zm1.440-3.300c-.301.420-.841.600-1.262.300-3.239-1.980-8.159-2.580-11.939-1.380-.479.120-1.020-.120-1.140-.600-.120-.480.120-1.021.600-1.141C9.600 9.900 15 10.561 18.720 12.840c.361.181.540.780.241 1.200zm.120-3.360C15.240 8.400 8.820 8.160 5.160 9.301c-.600.179-1.200-.181-1.380-.721-.180-.601.180-1.200.720-1.381 4.260-1.260 11.280-1.020 15.721 1.621.539.300.719 1.020.419 1.560-.299.421-1.020.599-1.559.300z"/></svg></button>
  <button class="app open" aria-label="Outlook"><svg viewBox="0 0 100 100"><rect width="100" height="100" rx="23" fill="#fff"/><path d="M30 17h48v15H30z" fill="#2257a4"/><path d="M30 25h50v38H30z" fill="#2f74cc"/><path d="M47 25h17v16H47zM64 41h16v18H64z" fill="#46a3e6"/><path d="M64 25h16v16H64z" fill="#76d0f8"/><path d="M26 50l57 32H26z" fill="#55a9e2"/><path d="M83 52v30L47 63z" fill="#3f94dc"/><rect x="9" y="32" width="38" height="36" rx="3" fill="#2d6fc9"/><text x="28" y="59" class="office">O</text></svg></button>
  <button class="app" aria-label="Excel"><svg viewBox="0 0 100 100"><rect width="100" height="100" rx="23" fill="#fff"/><path d="M26 17h57v65H26z" fill="#4f9f6d"/><path d="M54 17h29v16H54z" fill="#64c08c"/><path d="M54 49h29v17H54zM26 49h28v33H26z" fill="#387a49"/><path d="M26 66h57v16H26z" fill="#2d5a3a"/><rect x="9" y="32" width="38" height="36" rx="3" fill="#34743f"/><text x="28" y="59" class="office">X</text></svg></button>
  <button class="app open" aria-label="WhatsApp"><svg viewBox="0 0 100 100"><rect width="100" height="100" rx="23" fill="url(#g-green)"/><path transform="translate(12 11) scale(3.250)" fill="#f5f5f5" d="M17.472 14.382c-.297-.149-1.758-.867-2.030-.967-.273-.099-.471-.148-.670.150-.197.297-.767.966-.940 1.164-.173.199-.347.223-.644.075-.297-.150-1.255-.463-2.390-1.475-.883-.788-1.480-1.761-1.653-2.059-.173-.297-.018-.458.130-.606.134-.133.298-.347.446-.520.149-.174.198-.298.298-.497.099-.198.050-.371-.025-.520-.075-.149-.669-1.612-.916-2.207-.242-.579-.487-.500-.669-.510-.173-.008-.371-.010-.570-.010-.198 0-.520.074-.792.372-.272.297-1.040 1.016-1.040 2.479 0 1.462 1.065 2.875 1.213 3.074.149.198 2.096 3.200 5.077 4.487.709.306 1.262.489 1.694.625.712.227 1.360.195 1.871.118.571-.085 1.758-.719 2.006-1.413.248-.694.248-1.289.173-1.413-.074-.124-.272-.198-.570-.347m-5.421 7.403h-.004a9.870 9.870 0 0 1-5.031-1.378l-.361-.214-3.741.982.998-3.648-.235-.374a9.860 9.860 0 0 1-1.510-5.260c.001-5.450 4.436-9.884 9.888-9.884 2.640 0 5.122 1.030 6.988 2.898a9.825 9.825 0 0 1 2.893 6.994c-.003 5.450-4.437 9.884-9.885 9.884m8.413-18.297A11.815 11.815 0 0 0 12.050 0C5.495 0 .160 5.335.157 11.892c0 2.096.547 4.142 1.588 5.945L.057 24l6.305-1.654a11.882 11.882 0 0 0 5.683 1.448h.005c6.554 0 11.890-5.335 11.893-11.893a11.821 11.821 0 0 0-3.480-8.413z"/></svg></button>
  <button class="app" aria-label="Word"><svg viewBox="0 0 100 100"><rect width="100" height="100" rx="23" fill="#fff"/><path d="M26 17h57v16H26z" fill="#5fa2e8"/><path d="M26 33h57v16H26z" fill="#3f79cf"/><path d="M26 49h57v17H26z" fill="#2856b5"/><path d="M26 66h57v16H26z" fill="#1e3d85"/><rect x="9" y="32" width="38" height="36" rx="3" fill="#2550b0"/><text x="28" y="59" class="office">W</text></svg></button>
  <button class="app" aria-label="Notion Calendar"><svg viewBox="0 0 100 100"><path d="M6 8l70-7q6 0 7 7l1 8 8-1q6 0 6 7v68q0 6-6 7l-66 5q-6 0-7-6l-1-9-5 1q-8 0-8-8V15q0-6 7-7z" fill="#fff"/><path d="M10 12l66-7q3 0 3 4v6l-60 6-3 4-1 58-4 1q-4 0-4-4V17q0-4 3-5z"/><path d="M22 21l68-5q4 0 4 4v68q0 4-4 5l-67 5q-4 0-4-5V25q0-4 3-4z"/><path d="M24 38l64-5v51l-64 5z" fill="#fff"/><text x="56" y="79" class="notion-day">31</text></svg></button>
  <button class="app" aria-label="Insta360"><svg viewBox="0 0 100 100"><circle cx="50" cy="48" r="58" fill="#fff"/><circle cx="50" cy="48" r="40.500" fill="none" stroke="#944a85" stroke-width="21"/></svg></button>
  <button class="app" aria-label="iPhone"><svg viewBox="0 0 100 100"><rect width="100" height="100" rx="23" fill="#cbcbcb"/><rect x="30" y="8" width="41" height="84" rx="8" fill="#111"/><rect x="32" y="10" width="37" height="80" rx="6" fill="#f3a39b"/><path d="M69 34v50q0 6-6 6H38q-6 0-6-6v-6q14-14 19-26t18-18z" fill="#1d5f80"/><path d="M69 34v20q-14 8-20 22-8 8-17 10v-8q14-14 19-26t18-18z" fill="#4fa7bb"/><path d="M60 10q9 0 9 6v18Q58 40 50 54q-2-24 10-44z" fill="#8b8488"/><rect x="44" y="12" width="13" height="5" rx="2.500"/></svg></button>
  <button class="app" aria-label="Replit"><svg viewBox="0 0 100 100"><rect width="100" height="100" rx="23" fill="#1c2031"/><path fill="#ed6c31" d="M26 22q0-3 3-3h21q3 0 3 3v18H29q-3 0-3-3zM53 40h23q3 0 3 3v14q0 3-3 3H53zM26 63q0-3 3-3h24v18q0 3-3 3H29q-3 0-3-3z"/></svg></button>
  <i class="dock-rule"></i>
  <button class="app" aria-label="Webex"><svg viewBox="0 0 100 100" fill="none" stroke-width="14" stroke-linecap="round"><rect width="100" height="100" rx="23" fill="url(#g-black)"/><path d="M15 35Q20 74 35 74C49 74 51 26 66 26Q76 26 79 41" stroke="url(#g-webex)"/><path d="M86 36Q80 74 66 74C52 74 50 26 34 26Q27 26 23 33" stroke="#3f68f4"/></svg></button>
  <button class="app" aria-label="Vista Previa"><svg viewBox="0 0 100 100"><rect width="100" height="100" rx="23" fill="#f1f1f1"/><path d="M8 54V22Q8 8 22 8h56q14 0 14 14v32z" fill="#9cb9ec"/><path d="M8 54h84v26q0 13-14 13H22Q8 93 8 80z" fill="#35477f"/><path d="M8 70q14-8 20 2 10-8 20 4v16H20Q8 92 8 80z" fill="#dfe7ef"/><path d="M14 86l10-4 12 8-12 4z" fill="#7b6250"/><path d="M51 66l-8 30q0 8 28 8t30-8l-7-30z" fill="#a9b1b9" stroke="#c9cfd4" stroke-width="2"/><path d="M56 70l-6 22q20 10 44 0l-5-22z" fill="#dfe4e9"/><path d="M60 78l8-6 6 8-8 6zM76 74l8 4-6 6z" fill="#8b94a0"/><path d="M52 93q20-9 40 0-20 9-40 0z" fill="#f7f8f9"/><rect x="51" y="48" width="45" height="21" rx="6" fill="#121212"/></svg></button>
  <button class="app" aria-label="Utilidad de Discos"><svg viewBox="0 0 100 100"><rect x="1" y="1" width="98" height="98" rx="22" fill="#f5f8fb" stroke="#bcc8d2" stroke-width="4"/><path d="M40 15q-14-2-14 12 0 33 26 35 22-2 20-35 0-14-14-12" fill="none" stroke="#c4c8cc" stroke-width="3"/><path d="M38 15h4M56 15h4" stroke="#222" stroke-width="6"/><path d="M34 66q2 20 24 19" fill="none" stroke="#222" stroke-width="4"/><path d="M60 50h42l6 45v8H54v-8z" fill="#a9b5bd"/><path d="M54 96h54v8H54z" fill="#555"/><path d="M66 53h24v6H66z" fill="#222"/><circle cx="80" cy="78" r="15" fill="#c6d0d6" stroke="#8b979f" stroke-width="2"/><circle cx="80" cy="79" r="8" fill="#eef1f3"/><path d="M70 62q-2-17 9-16 10 2 7 8M70 60l9 9" fill="none" stroke="#222" stroke-width="3"/></svg></button>
  <i class="dock-rule"></i>
  <button class="app" aria-label="Descargas"><svg viewBox="0 0 100 100"><path d="M4 12q0-6 6-6h20l6 8h56q5 0 5 6v57q0 6-6 6H9q-5 0-5-6z" fill="#4a9bd8"/><path d="M4 20h92q1 0 1 3v54q0 6-6 6H9q-5 0-5-6z" fill="#7fc6f3"/><path d="M60 7h31v8H60z" fill="#eee"/><path d="M12 6h47l29 29v71H12z" fill="#f6f6f6"/><path d="M60 6v24q0 4 4 4h24z" fill="#dedede"/><path d="M46 6h10v52q-5 5-10 0z" fill="#3d4145"/><path d="M51 8v48" stroke="#c6cbd0" stroke-width="6" stroke-dasharray="2 2"/><text x="50" y="98" class="zip">ZIP</text></svg></button>
  <button class="app" aria-label="Papelera"><svg viewBox="0 0 100 100"><path d="M10 10l10-12 14-5 10 6 8-6 14 8 14-4 10 13-20 12H22z" fill="#d9d9d9"/><path d="M24 5l14 4 6 8-16-2z" fill="#4d4d4d"/><path d="M36 2l10 4-4 5-12-2z" fill="#5cb8e8"/><path d="M56 1l14 3 2 10-14 2z" fill="#39518f"/><path d="M50 6l5 2-5 10-5-2z" fill="#d2593f"/><path d="M6 6q4 12 44 12T94 6l-9 86q-4 12-35 12t-35-12z" fill="url(#g-bin)"/><path d="M6 6q4 11 44 12Q90 17 94 6" fill="none" stroke="#fff" stroke-width="2"/></svg></button>
</footer>
</div>
</body>
</html>
```
FILE: styles.css
```css
* { box-sizing: border-box; }
body {
  margin: 0;
  min-height: 100vh;
  display: flex;
  flex-direction: column;
  background: #292929;
  font-family: Inter, "Liberation Sans", sans-serif;
  color: #fff;
}
button {
  font: inherit;
  color: inherit;
  background: none;
  border: 0;
  padding: 0;
  margin: 0;
}
a { color: inherit; text-decoration: none; }
svg { display: block; flex: none; overflow: visible; }
h2, h3, p { margin: 0; }
.sprite { position: absolute; width: 0; height: 0; }

/* System menu bar */
.menubar {
  height: 78px;
  flex: none;
  display: flex;
  justify-content: space-between;
  align-items: center;
  padding: 0 34px 2px 40px;
  font-size: 25px;
  font-weight: 500;
  border-bottom: 2px solid #1b1b1b;
}
.menubar-menus { display: flex; align-items: center; gap: 41px; }
.menu-app { font-size: 26px; font-weight: 700; }
.menubar-status, .status-apps, .status-system { display: flex; align-items: center; }
.menubar-status { font-weight: 400; gap: 34px; }
.status-apps { gap: 34px; }
.status-system { gap: 38px; }
.status-clock { font-size: 26px; }
.status-lang {
  width: 44px;
  height: 32px;
  border: 2px solid #e9e9e9;
  border-radius: 6px;
  font-size: 21px;
  line-height: 28px;
  text-align: center;
}
.status-battery { display: flex; align-items: center; gap: 10px; font-size: 23px; }

/* Browser window */
.desktop {
  flex: 1;
  display: flex;
  flex-direction: column;
  background: linear-gradient(#1a1a1a 0 93%, #2d2d2d);
}
.window {
  flex: 1;
  display: flex;
  flex-direction: column;
  border-radius: 20px;
  overflow: hidden;
  background: #d2e8c3;
  color: #1f1f1f;
}
.tabstrip {
  height: 80px;
  flex: none;
  display: flex;
  align-items: center;
  padding: 0 12px 0 42px;
  box-shadow: inset 0 2px 0 #e6f3dd;
}
.lights { display: flex; gap: 16px; width: 138px; }
.lights i { width: 24px; height: 24px; border-radius: 50%; }
.light-close { background: #ec6a5e; }
.light-min { background: #f5bf4f; }
.light-max { background: #61c554; }
.tabs { display: flex; align-self: stretch; }
.tab {
  width: 150px;
  display: flex;
  align-items: center;
  padding-left: 18px;
  gap: 12px;
  font-size: 23px;
  position: relative;
}
.tab > svg:first-child { width: 40px; height: 40px; }
.tab > span {
  width: 66px;
  white-space: nowrap;
  text-align: left;
  mask-image: linear-gradient(90deg, #000 60%, transparent 92%);
}
.tab::after {
  content: "";
  width: 4px;
  height: 32px;
  position: absolute;
  right: 0;
  border-radius: 2px;
  background: #fff;
}
.tab-before-active::after { display: none; }
.tab-active {
  align-self: flex-end;
  height: 68px;
  width: 138px;
  margin: 0 6px;
  padding: 0 0 4px 14px;
  border-radius: 20px 20px 0 0;
  background: #fff;
}
.tab-active > span { width: 14px; mask-image: none; }
.tab-active .tab-close { width: 16px; height: 16px; margin-left: 6px; }
.tab-active::before, .tab-active::after {
  content: "";
  position: absolute;
  bottom: 0;
  width: 20px;
  height: 20px;
  border-radius: 0;
}
.tab-active::before { left: -20px; background: radial-gradient(circle at 0 0, transparent 20px, #fff 21px); }
.tab-active::after { right: -20px; background: radial-gradient(circle at 100% 0, transparent 20px, #fff 21px); }
.newtab { margin-left: 24px; }
.tabsearch {
  margin-left: auto;
  width: 56px;
  height: 56px;
  border-radius: 20px;
  background: #fff;
  display: grid;
  place-items: center;
}
.toolbar {
  height: 92px;
  flex: none;
  display: flex;
  align-items: center;
  padding: 0 28px 0 8px;
  border-radius: 20px 20px 0 0;
  background: #fff;
}
.tool { width: 72px; height: 72px; display: grid; place-items: center; }
.omnibox {
  flex: 1;
  margin-left: 16px;
  height: 68px;
  border-radius: 34px;
  background: #e1e1e1;
  display: flex;
  align-items: center;
  padding: 0 32px 0 10px;
  font-size: 28px;
}
.site-info {
  width: 48px;
  height: 48px;
  margin-right: 16px;
  border-radius: 50%;
  background: #fff;
  display: grid;
  place-items: center;
}
.url-host {
  field-sizing: content;
  font: inherit;
  color: inherit;
  border: 0;
  padding: 0;
  background: none;
}
.url-path { color: #5f6368; }
.star { margin-left: auto; }
.tools-right { display: flex; align-items: center; gap: 35px; margin-left: 37px; }
.rule { width: 4px; height: 32px; border-radius: 2px; background: #d2e8c3; }
.bookmarks {
  height: 70px;
  flex: none;
  display: flex;
  align-items: center;
  padding: 0 62px 12px 38px;
  background: #fff;
  border-bottom: 2px solid #cfcfcf;
  font-size: 23px;
}
.bookmarks > .rule { margin: 0 28px 0 30px; }
.bm-list { display: flex; gap: 35px; }
.bm-list a { display: flex; align-items: center; gap: 12px; }
.bm-list svg { width: 32px; height: 32px; }
.bm-more { margin-left: auto; }
.fav-letters { font-size: 20px; font-weight: 700; }
.fav-red { fill: #d93b3b; }
.fav-mit { font-size: 17px; font-weight: 800; fill: #9b2335; }
.fav-small { font-size: 14px; font-weight: 700; fill: #fff; }

/* Website */
.page {
  flex: 1;
  display: flex;
  flex-direction: column;
  position: relative;
  background: #111627;
  color: #d1d5db;
}
.site-nav {
  height: 130px;
  flex: none;
  border-bottom: 2px solid #364151;
  background: linear-gradient(#151b2b, #111627 40%);
}
.site-nav-inner {
  width: 2432px;
  max-width: 100%;
  height: 100%;
  margin: 0 auto;
  padding: 0 0 0 8px;
  display: grid;
  grid-template-columns: 1fr auto 1fr;
  align-items: center;
}
.links { display: flex; gap: 64px; font-size: 31px; margin-right: 164px; }
.links .current { color: #6bd09c; font-weight: 600; }
.nav-actions { display: flex; align-items: center; justify-content: flex-end; gap: 24px; font-size: 27px; }
.search-btn {
  width: 76px;
  height: 76px;
  border: 2px solid #364151;
  border-radius: 16px;
  background: #1f2738;
  display: grid;
  place-items: center;
}
.lang {
  display: flex;
  gap: 4px;
  padding: 8px;
  border: 2px solid #364151;
  border-radius: 16px;
  background: #1c2333;
}
.lang button { width: 84px; height: 64px; border-radius: 8px; }
.lang button:last-child { width: 88px; }
.lang .lang-on { background: #57b486; color: #fff; font-weight: 500; }
.approach {
  width: 2304px;
  max-width: 100%;
  margin: 0 auto;
  padding-bottom: 160px;
  text-align: center;
}
h2 { font-size: 90px; line-height: 96px; font-weight: 700; color: #fff; }
h2 em { font-style: normal; color: #6bd09c; }
.lead { margin-top: 47px; font-size: 37px; line-height: 56px; }
.cards {
  margin-top: 127px;
  display: grid;
  grid-template-columns: 1fr 1fr;
  gap: 64px;
  text-align: left;
}
.card {
  position: relative;
  padding: 64px 64px 63px;
  border: 2px solid #333d4d;
  border-radius: 48px;
  background: #1d2433;
  box-shadow: 0 20px 50px rgba(6, 10, 20, .5);
}
.card::before {
  content: "";
  position: absolute;
  inset: 0;
  border-radius: 46px;
  background: var(--accent) top / 100% 8px no-repeat;
}
.card-green { --accent: linear-gradient(135deg, #57b486, #44936a); }
.card-blue { --accent: linear-gradient(135deg, #4d80ee, #365fe2); }
.card-mix { --accent: linear-gradient(135deg, #6bd09c, #4a80f0); }
.card-sky { --accent: linear-gradient(135deg, #6fa2f2, #57b486); }
.card-head { display: flex; align-items: center; gap: 32px; margin-bottom: 49px; }
.card-icon {
  width: 128px;
  height: 128px;
  flex: none;
  border-radius: 32px;
  background: var(--accent);
  box-shadow: 0 16px 28px rgba(10, 16, 24, .35);
  display: grid;
  place-items: center;
}
.card-icon svg { width: 64px; height: 64px; }
.card svg { fill: none; stroke: #fff; stroke-width: 2; stroke-linecap: round; stroke-linejoin: round; }
h3 { font-size: 46px; line-height: 66px; font-weight: 600; color: #fff; }
.bar { display: block; width: 128px; height: 8px; margin-top: 14px; border-radius: 4px; background: var(--accent); }
.card p { font-size: 30px; line-height: 52px; }
.card .mark {
  position: absolute;
  right: 32px;
  bottom: 32px;
  width: 96px;
  height: 96px;
  stroke: #57b486;
  opacity: .12;
}
.card-raised {
  margin: -21px -11px 0;
  padding: 66px 65px;
  align-self: start;
  border-color: #468a70;
  background: linear-gradient(135deg, #212e38, #202a3b 60%, #1f293d);
  box-shadow: 0 36px 80px rgba(8, 12, 20, .7);
}
.card-raised .card-head { height: 130px; }
.card-raised .card-icon { width: 144px; height: 144px; margin: 0 -7px; border-radius: 36px; }
.card-raised .card-icon svg { width: 72px; height: 72px; }
.card-raised h3 { font-size: 47px; color: #6bd09c; }
.card-raised .bar { width: 130px; }
.card-raised p { font-size: 31px; line-height: 53px; }
.card-raised .mark { width: 98px; height: 98px; opacity: .25; }
.next-band { flex: 1; background: linear-gradient(#202938, #1e2536); }
.to-top {
  position: absolute;
  right: 48px;
  bottom: 48px;
  width: 112px;
  height: 112px;
  border-radius: 50%;
  background: #57b486;
  box-shadow: 0 16px 30px rgba(8, 12, 20, .3);
}
.to-top button {
  width: 96px;
  height: 96px;
  border-radius: 50%;
  background: #4992ea;
  box-shadow: 0 12px 20px rgba(8, 40, 30, .15);
  display: grid;
  place-items: center;
}

/* Dock */
.dock {
  flex: none;
  align-self: center;
  height: 154px;
  margin: 4px 0 10px;
  padding: 0 5px 0 3px;
  display: flex;
  border: 2px solid #8c8c8c;
  border-radius: 48px;
  background: #717171;
}
.app {
  width: 133px;
  padding: 20px 16px 0 17px;
  position: relative;
  align-self: flex-start;
}
.app svg { width: 100px; height: 100px; }
.open::after {
  content: "";
  position: absolute;
  left: 63px;
  top: 140px;
  width: 8px;
  height: 8px;
  border-radius: 50%;
  background: #000;
}
.dock-rule { width: 2px; height: 112px; margin: 18px 29px 0 30px; background: #444; }
.badge {
  position: absolute;
  right: 2px;
  top: 8px;
  min-width: 48px;
  height: 48px;
  padding: 0 8px;
  border-radius: 24px;
  background: #df4d40;
  color: #fff;
  font-size: 25px;
  line-height: 48px;
}
.count {
  position: absolute;
  right: 4px;
  top: 79px;
  width: 52px;
  height: 52px;
  border: 5px solid #3870de;
  border-radius: 50%;
  background: #edf3fd;
  color: #444;
  font-size: 26px;
  line-height: 42px;
}
.cal-month { font-size: 20px; font-weight: 600; fill: #fff; text-anchor: middle; }
.cal-day { font-size: 58px; font-weight: 300; fill: #222; text-anchor: middle; }
.office { font-size: 27px; font-weight: 600; fill: #fff; text-anchor: middle; }
.notion-day { font-family: "Liberation Serif", serif; font-size: 50px; font-weight: 700; text-anchor: middle; }
.zip { font-size: 17px; fill: #777; text-anchor: middle; }
```
